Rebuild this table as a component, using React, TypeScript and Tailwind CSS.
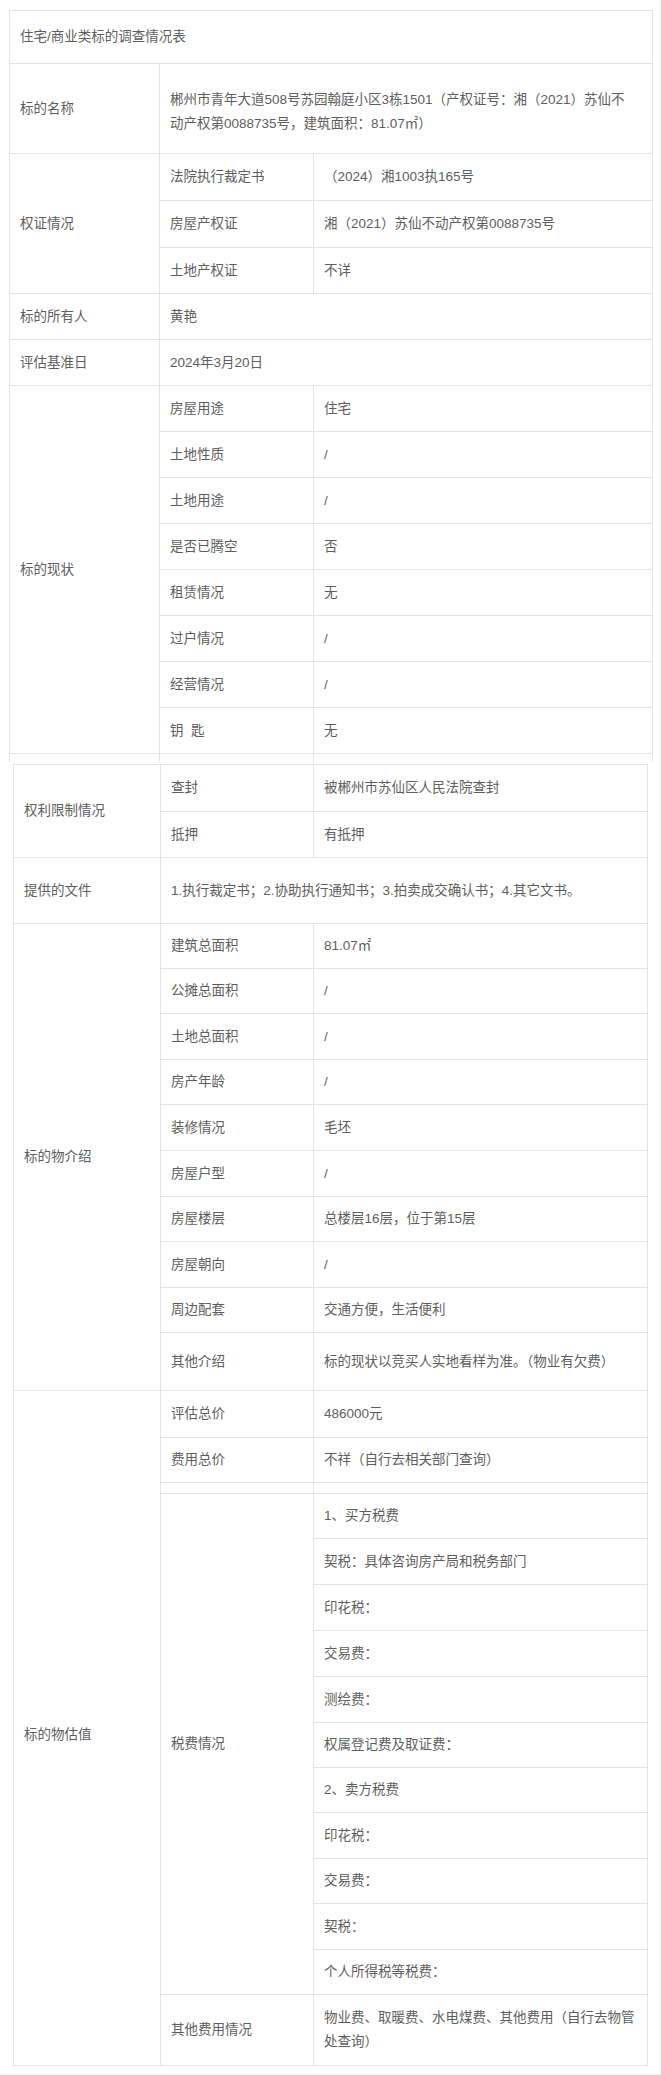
import React from 'react';
import clsx from 'clsx';

type Pair = [string, string];

function Cell({ children, className }: { children?: React.ReactNode; className?: string }) {
  return (
    <div className={clsx('bg-white flex items-center pl-[10px] pr-[10px] text-[13.5px] leading-6 text-[#5e5e5e]', className)}>
      {children}
    </div>
  );
}

const certRows: Pair[] = [
  ['法院执行裁定书', '（2024）湘1003执165号'],
  ['房屋产权证', '湘（2021）苏仙不动产权第0088735号'],
  ['土地产权证', '不详'],
];

const statusRows: Pair[] = [
  ['房屋用途', '住宅'],
  ['土地性质', '/'],
  ['土地用途', '/'],
  ['是否已腾空', '否'],
  ['租赁情况', '无'],
  ['过户情况', '/'],
  ['经营情况', '/'],
  ['钥  匙', '无'],
];

const limitRows: Pair[] = [
  ['查封', '被郴州市苏仙区人民法院查封'],
  ['抵押', '有抵押'],
];

const introRows: Pair[] = [
  ['建筑总面积', '81.07㎡'],
  ['公摊总面积', '/'],
  ['土地总面积', '/'],
  ['房产年龄', '/'],
  ['装修情况', '毛坯'],
  ['房屋户型', '/'],
  ['房屋楼层', '总楼层16层，位于第15层'],
  ['房屋朝向', '/'],
  ['周边配套', '交通方便，生活便利'],
  ['其他介绍', '标的现状以竞买人实地看样为准。（物业有欠费）'],
];

const taxRows = [
  '1、买方税费',
  '契税：具体咨询房产局和税务部门',
  '印花税：',
  '交易费：',
  '测绘费：',
  '权属登记费及取证费：',
  '2、卖方税费',
  '印花税：',
  '交易费：',
  '契税：',
  '个人所得税等税费：',
];

export default function App() {
  return (
    <div
      className="relative w-[661px] min-h-[2075px] bg-white pt-[10px] border-r border-[#f0f0f0]"
      style={{ fontFamily: '"Liberation Sans", "Noto Sans CJK SC", sans-serif' }}
    >
      {/* upper part of the survey table */}
      <div className="ml-[9px] w-[644px] grid grid-cols-[149px_153px_338px] grid-rows-[52px_89px_46px_46px_45px_45px_45px_45px_45px_45px_45px_45px_45px_45px_45px_8px] gap-px px-px pt-px bg-[#e3e3e3]">
        <Cell className="col-span-3">住宅/商业类标的调查情况表</Cell>

        <Cell>标的名称</Cell>
        <Cell className="col-span-2 pt-[6px]">
          <span className="whitespace-nowrap">
            郴州市青年大道508号苏园翰庭小区3栋1501（产权证号：湘（2021）苏仙不
            <br />
            动产权第0088735号，建筑面积：81.07㎡）
          </span>
        </Cell>

        <Cell className="row-span-3">权证情况</Cell>
        {certRows.map(([k, v]) => (
          <React.Fragment key={k}>
            <Cell>{k}</Cell>
            <Cell>{v}</Cell>
          </React.Fragment>
        ))}

        <Cell>标的所有人</Cell>
        <Cell className="col-span-2">黄艳</Cell>

        <Cell>评估基准日</Cell>
        <Cell className="col-span-2">2024年3月20日</Cell>

        <Cell className="row-span-8">标的现状</Cell>
        {statusRows.map(([k, v]) => (
          <React.Fragment key={k}>
            <Cell className="whitespace-pre">{k}</Cell>
            <Cell>{v}</Cell>
          </React.Fragment>
        ))}

        <Cell />
        <Cell />
        <Cell />
      </div>

      {/* lower part, slightly offset */}
      <div className="mt-[2px] ml-[13px] w-[635px] grid grid-cols-[146px_152px_333px] grid-rows-[46px_45px_65px_44px_44px_45px_44px_45px_45px_44px_45px_44px_57px_46px_44px_10px_44px_45px_45px_45px_45px_44px_44px_45px_44px_45px_44px_70px] gap-px p-px bg-[#e3e3e3]">
        <Cell className="row-span-2 pl-[8px]">权利限制情况</Cell>
        {limitRows.map(([k, v]) => (
          <React.Fragment key={k}>
            <Cell>{k}</Cell>
            <Cell>{v}</Cell>
          </React.Fragment>
        ))}

        <Cell className="pl-[8px]">提供的文件</Cell>
        <Cell className="col-span-2">1.执行裁定书；2.协助执行通知书；3.拍卖成交确认书；4.其它文书。</Cell>

        <Cell className="row-span-10 pl-[8px]">标的物介绍</Cell>
        {introRows.map(([k, v]) => (
          <React.Fragment key={k}>
            <Cell>{k}</Cell>
            <Cell>{v}</Cell>
          </React.Fragment>
        ))}

        <Cell className="row-span-15 pl-[8px] pt-[14px]">标的物估值</Cell>
        <Cell>评估总价</Cell>
        <Cell>486000元</Cell>
        <Cell>费用总价</Cell>
        <Cell>不祥（自行去相关部门查询）</Cell>
        <Cell />
        <Cell />
        <Cell className="row-span-11">税费情况</Cell>
        {taxRows.map((t, i) => (
          <Cell key={i}>{t}</Cell>
        ))}
        <Cell>其他费用情况</Cell>
        <Cell className="pr-0">
          <span className="whitespace-nowrap">
            物业费、取暖费、水电煤费、其他费用（自行去物管
            <br />
            处查询）
          </span>
        </Cell>
      </div>

      <div className="absolute left-0 right-0 top-[2074px] h-px bg-[#eeeeee]" />
    </div>
  );
}
